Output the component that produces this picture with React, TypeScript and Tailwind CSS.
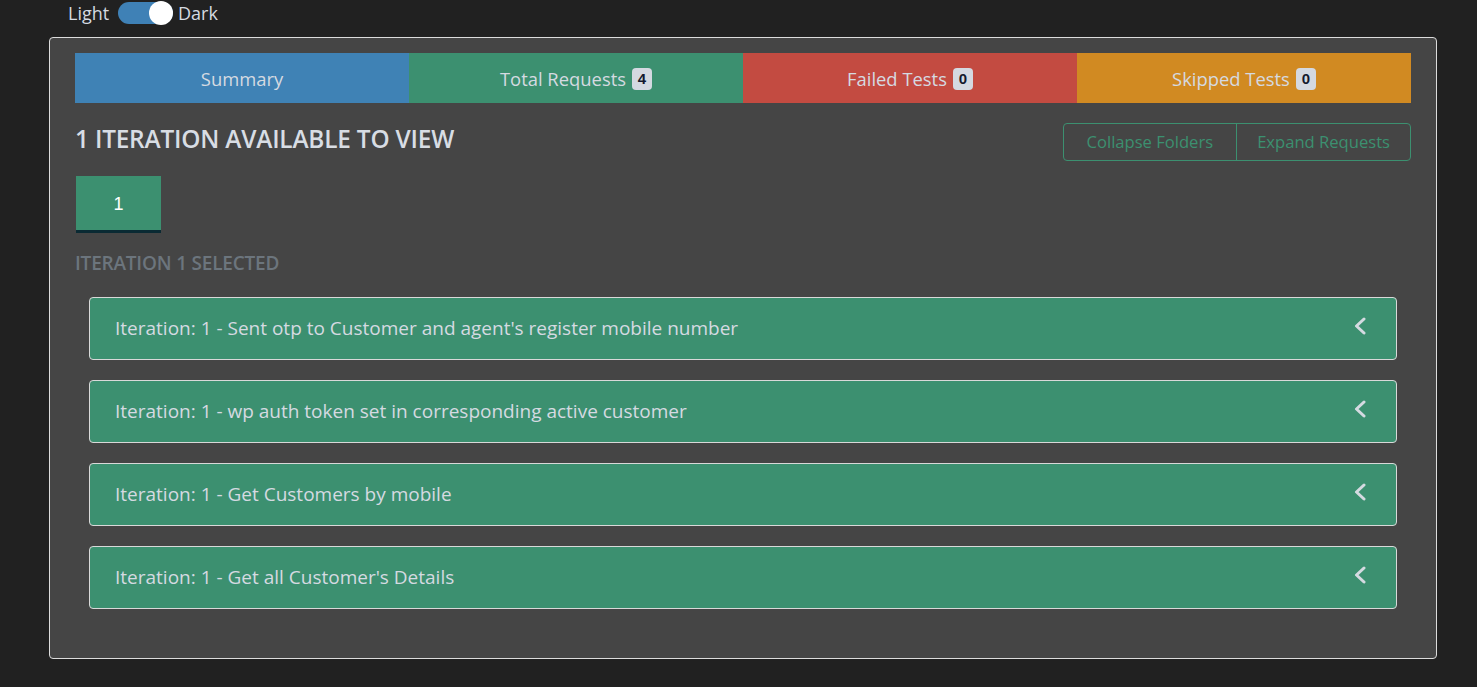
const tabs = [
  { label: 'Summary', bg: 'bg-[#3f82b5]' },
  { label: 'Total Requests', bg: 'bg-[#3c9070]', count: 4 },
  { label: 'Failed Tests', bg: 'bg-[#c34b41]', count: 0 },
  { label: 'Skipped Tests', bg: 'bg-[#d18a22]', count: 0 },
];

const requests = [
  "Iteration: 1 - Sent otp to Customer and agent's register mobile number",
  'Iteration: 1 - wp auth token set in corresponding active customer',
  'Iteration: 1 - Get Customers by mobile',
  "Iteration: 1 - Get all Customer's Details",
];

function Chevron() {
  return (
    <svg width="14" height="18" viewBox="0 0 14 18" fill="none" className="-mt-[5px]">
      <polyline points="11,2 3.5,9 11,16" stroke="#d5dae1" strokeWidth="3" strokeLinecap="round" strokeLinejoin="round" />
    </svg>
  );
}

export default function App() {
  return (
    <div className="min-h-screen bg-[#212121] font-['Open_Sans',sans-serif] text-[#d5dae1]">
      <div className="flex items-center gap-[5px] pl-[68px] pt-[1px] h-[25px] text-[18px]">
        <span className="w-[45px]">Light</span>
        <span className="relative w-[55px] h-[22px] rounded-full bg-[#3f81b6]">
          <span className="absolute right-0 top-[-1px] w-[24px] h-[24px] rounded-full bg-white" />
        </span>
        <span>Dark</span>
      </div>

      <div className="ml-[49px] mr-[40px] mt-[12px] bg-[#454545] border border-[#dcdcdc] rounded-[4px] px-[25px] pt-[15px] pb-[49px]">
        <div className="grid grid-cols-4 h-[50px]">
          {tabs.map((t) => (
            <div key={t.label} className={`${t.bg} flex items-center justify-center gap-[6px] pt-[1px] text-[18.4px]`}>
              <span>{t.label}</span>
              {t.count !== undefined && (
                <span className="bg-[#d4d9e1] text-[#141a2e] rounded-[4px] w-[20px] h-[22px] leading-[22px] text-center text-[15px] font-bold font-['Liberation_Sans',sans-serif]">
                  {t.count}
                </span>
              )}
            </div>
          ))}
        </div>

        <div className="flex items-start justify-between mt-[20px]">
          <h2 className="text-[24.4px] font-semibold text-[#d8dde4] leading-[32px] tracking-[-0.2px]">1 ITERATION AVAILABLE TO VIEW</h2>
          <div className="flex border border-[#3c9070] rounded-[4px] text-[#3c9070] text-[16.6px] h-[38px]">
            <button className="px-[23px]">Collapse Folders</button>
            <button className="px-[20px] border-l border-[#3c9070]">Expand Requests</button>
          </div>
        </div>

        <button className="mt-[15px] ml-px w-[85px] h-[57px] pt-[3px] bg-[#3c9070] border-b-[3px] border-[#0a2a33] text-white text-[18px] font-['Liberation_Sans',sans-serif]">
          1
        </button>

        <div className="mt-[17px] text-[19px] leading-[26px] font-semibold text-[#6c757d] tracking-[-0.2px]">ITERATION 1 SELECTED</div>

        <div className="mt-[21px] mx-[14px] flex flex-col gap-[20px]">
          {requests.map((r) => (
            <div
              key={r}
              className="flex items-center justify-between h-[63px] bg-[#3c9070] border border-[#d9d9d9] rounded-[4px] pl-[25px] pr-[29px] text-[19px]"
            >
              <span>{r}</span>
              <Chevron />
            </div>
          ))}
        </div>
      </div>
    </div>
  );
}
